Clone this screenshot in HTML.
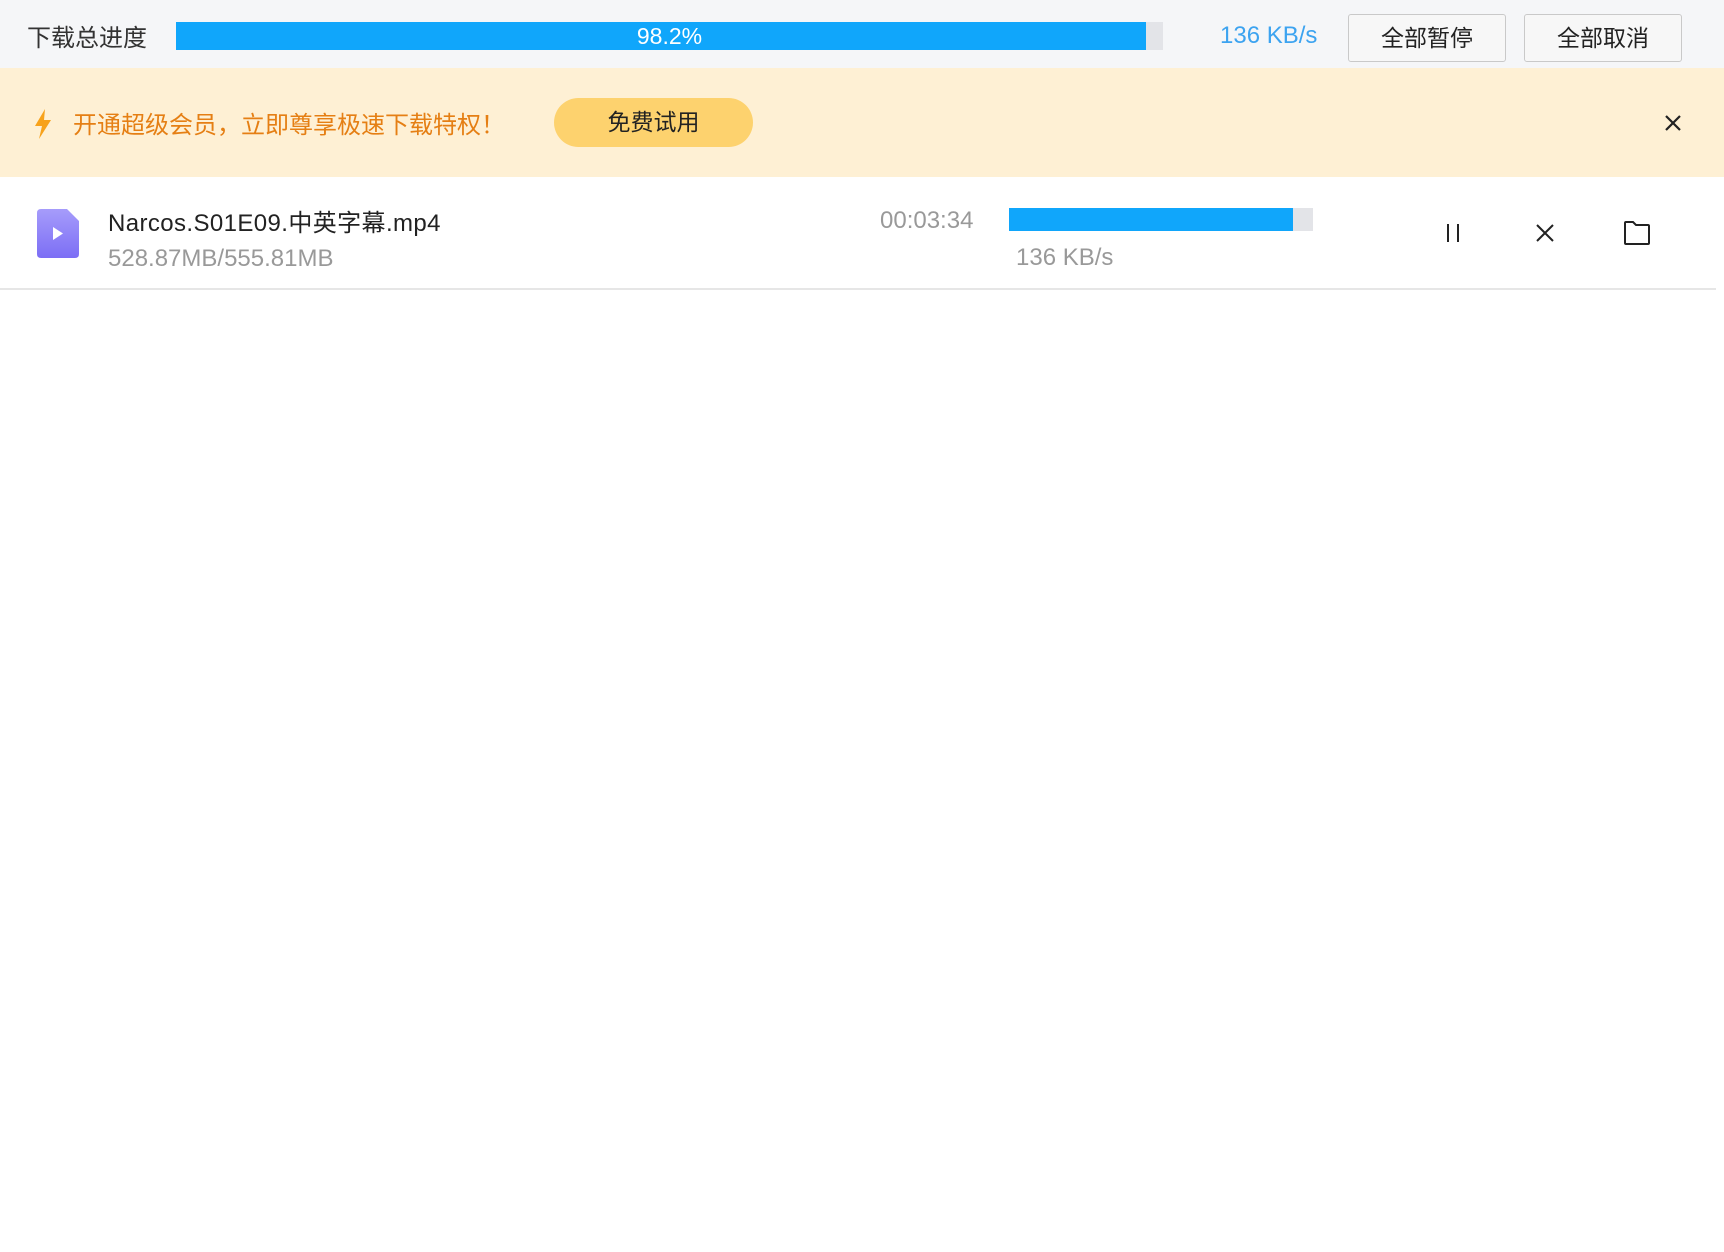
<!DOCTYPE html>
<html><head><meta charset="utf-8"><style>
*{margin:0;padding:0;box-sizing:border-box}
body{width:1724px;height:1252px;background:#fff;font-family:"Liberation Sans","Noto Sans CJK SC",sans-serif;position:relative;overflow:hidden}
.a{position:absolute;white-space:nowrap}
.top{left:0;top:0;width:1724px;height:68px;background:#f5f6f8}
.ban{left:0;top:68px;width:1724px;height:109px;background:#fef0d4}
.btn{border:1px solid #c9c9c9;border-radius:3px;background:#f7f7f7;font-size:23px;color:#222;text-align:center;line-height:46px;height:48px;width:158px;top:14px}
</style></head><body>
<div class="a top"></div>
<div class="a" style="left:27px;top:18px;font-size:24px;color:#333">下载总进度</div>
<div class="a" style="left:176px;top:22px;width:987px;height:28px;background:#e3e4e8"></div>
<div class="a" style="left:176px;top:22px;width:970px;height:28px;background:#10a6fb"></div>
<div class="a" style="left:176px;top:22px;width:987px;height:28px;line-height:28px;text-align:center;color:#fff;font-size:23px">98.2%</div>
<div class="a" style="left:1220px;top:22px;font-size:24px;color:#3ca3f0">136 KB/s</div>
<div class="a btn" style="left:1348px">全部暂停</div>
<div class="a btn" style="left:1524px">全部取消</div>
<div class="a ban"></div>
<svg class="a" style="left:32px;top:108px" width="22" height="32" viewBox="0 0 22 32"><path d="M13 1 L3 18 L10 18 L7 31 L19 12 L12 12 Z" fill="#f7a21b"/></svg>
<div class="a" style="left:73px;top:105px;font-size:24px;color:#e57f14">开通超级会员，立即尊享极速下载特权！</div>
<div class="a" style="left:554px;top:98px;width:199px;height:49px;border-radius:25px;background:#fdd26e;text-align:center;line-height:49px;font-size:23px;color:#222">免费试用</div>
<svg class="a" style="left:1664px;top:114px" width="18" height="18" viewBox="0 0 18 18"><path d="M2 2L16 16M16 2L2 16" stroke="#222" stroke-width="2.2"/></svg>
<svg class="a" style="left:37px;top:209px" width="42" height="49" viewBox="0 0 42 49"><defs><linearGradient id="g" x1="0" y1="0" x2="0" y2="1"><stop offset="0" stop-color="#a69cfb"/><stop offset="1" stop-color="#7c6ef5"/></linearGradient></defs><path d="M4 0H30L42 12V45Q42 49 38 49H4Q0 49 0 45V4Q0 0 4 0Z" fill="url(#g)"/><path d="M16 18L26 24.5L16 31Z" fill="#fff"/></svg>
<div class="a" style="left:108px;top:203px;font-size:24px;letter-spacing:0.4px;color:#222">Narcos.S01E09.中英字幕.mp4</div>
<div class="a" style="left:108px;top:245px;font-size:24px;color:#999">528.87MB/555.81MB</div>
<div class="a" style="left:880px;top:207px;font-size:24px;color:#999">00:03:34</div>
<div class="a" style="left:1009px;top:208px;width:304px;height:23px;background:#e3e4e8"></div>
<div class="a" style="left:1009px;top:208px;width:284px;height:23px;background:#10a6fb"></div>
<div class="a" style="left:1016px;top:244px;font-size:24px;color:#999">136 KB/s</div>
<svg class="a" style="left:1443px;top:222px" width="20" height="22"><path d="M5 2V20M15 2V20" stroke="#222" stroke-width="2"/></svg>
<svg class="a" style="left:1535px;top:223px" width="20" height="20"><path d="M2 2L18 18M18 2L2 18" stroke="#222" stroke-width="2"/></svg>
<svg class="a" style="left:1623px;top:220px" width="28" height="26" viewBox="0 0 28 26"><path d="M2 3Q2 2 3 2H10L13 5H25Q26 5 26 6V23Q26 24 25 24H3Q2 24 2 23Z" fill="none" stroke="#222" stroke-width="2"/></svg>
<div class="a" style="left:0;top:288px;width:1716px;height:2px;background:#e6e6e6"></div>
</body></html>
